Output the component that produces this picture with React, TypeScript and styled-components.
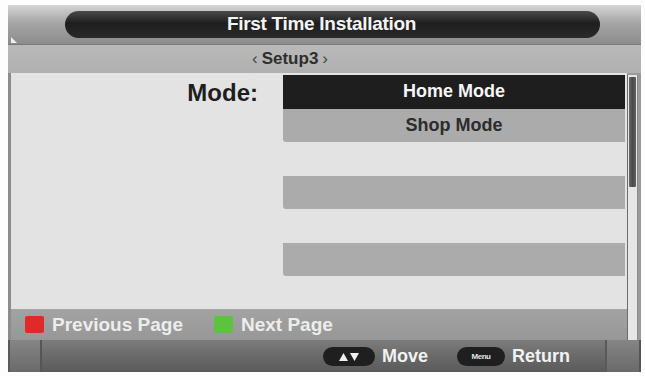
import React from "react";
import styled, { createGlobalStyle } from "styled-components";

const Global = createGlobalStyle`
  html, body { margin: 0; padding: 0; background: #fdfdfd; }
  body { font-family: "Liberation Sans", Arial, sans-serif; }
`;

const Frame = styled.div`
  margin: 5px 0 0 8px;
  width: 633px;
  height: 367px;
  display: flex;
  flex-direction: column;
  background: #9a9a9a;
`;

const Header = styled.div`
  position: relative;
  height: 40px;
  display: flex;
  align-items: center;
  padding: 0 41px 0 57px;
  background: linear-gradient(180deg, #d4d4d4 0%, #a6a6a6 45%, #8c8c8c 100%);
  border-bottom: 1px solid #7a7a7a;
  box-sizing: border-box;
`;

const Glint = styled.div`
  position: absolute;
  left: 3px;
  bottom: 1px;
  width: 0;
  height: 0;
  border-left: 6px solid #f0f0f0;
  border-top: 6px solid transparent;
`;

const TitlePill = styled.div`
  flex: 1;
  height: 27px;
  border-radius: 14px;
  background: linear-gradient(180deg, #4a4a4a 0%, #1e1e1e 45%, #2a2a2a 100%);
  color: #f4f4f4;
  font-weight: bold;
  font-size: 19px;
  letter-spacing: -0.3px;
  display: flex;
  align-items: center;
  justify-content: center;
  padding-right: 22px;
  margin-top: -1px;
`;

const SubHeader = styled.div`
  height: 28px;
  background: linear-gradient(180deg, #b9b9b9, #b0b0b0);
  display: flex;
  align-items: center;
  justify-content: center;
  padding-right: 69px;
  color: #2e2e2e;
  font-weight: bold;
  font-size: 17px;
  box-sizing: border-box;
`;

const Arrow = styled.span`
  font-weight: normal;
  font-size: 17px;
  color: #444;
  margin: 0 4px;
`;

const Body = styled.div`
  display: flex;
  flex: 1;
  min-height: 0;
`;

const Main = styled.div`
  width: 619px;
  display: flex;
  flex-direction: column;
`;

const Content = styled.div`
  height: 236px;
  background: #e3e3e3;
  border-left: 3px solid #8c8c8c;
  box-sizing: border-box;
  display: grid;
  grid-template-columns: 272px 342px;
  padding-top: 2px;
`;

const Label = styled.div`
  text-align: right;
  padding-right: 25px;
  padding-top: 4px;
  font-weight: bold;
  font-size: 24px;
  color: #1e1e1e;
`;

const List = styled.div`
  display: flex;
  flex-direction: column;
`;

const Row = styled.div<{ $kind: "active" | "grey" | "blank" }>`
  height: 33.5px;
  display: flex;
  align-items: center;
  justify-content: center;
  font-weight: bold;
  font-size: 18px;
  background: ${(p) =>
    p.$kind === "active" ? "#1e1e1e" : p.$kind === "grey" ? "#ababab" : "transparent"};
  color: ${(p) => (p.$kind === "active" ? "#f6f6f6" : "#2c2c2c")};
  border-radius: ${(p) => (p.$kind === "grey" ? "0 0 0 3px" : "0")};
`;

const Footer = styled.div`
  height: 31px;
  background: linear-gradient(180deg, #a3a3a3, #979797);
  border-left: 3px solid #8c8c8c;
  box-sizing: border-box;
  display: flex;
  align-items: center;
  padding-left: 14px;
  gap: 8px;
`;

const ColorKey = styled.div<{ $color: string }>`
  width: 19px;
  height: 17px;
  border-radius: 2px;
  background: ${(p) => p.$color};
`;

const FooterText = styled.span<{ $gap?: number }>`
  color: #ededed;
  font-weight: bold;
  font-size: 19px;
  margin-right: ${(p) => p.$gap ?? 0}px;
`;

const ScrollCol = styled.div`
  width: 14px;
  background: #9a9a9a;
  display: flex;
  padding-top: 2px;
  box-sizing: border-box;
`;

const Track = styled.div`
  width: 11px;
  background: #e6e6e6;
  border-left: 1px solid #6d6d6d;
  border-right: 1px solid #8a8a8a;
  box-sizing: border-box;
  display: flex;
  flex-direction: column;
`;

const Thumb = styled.div`
  height: 110px;
  margin: 2px 1px 0;
  background: linear-gradient(90deg, #6a6a6a, #4a4a4a, #5f5f5f);
  border-radius: 1px;
`;

const BottomBar = styled.div`
  height: 32px;
  display: flex;
  background: linear-gradient(180deg, #7c7c7c 0%, #6a6a6a 50%, #5a5a5a 100%);
`;

const EndBlock = styled.div<{ $w: number }>`
  width: ${(p) => p.$w}px;
  background: linear-gradient(180deg, #858585, #6a6a6a);
  border-left: 2px solid #595959;
  border-right: 2px solid #555;
  box-sizing: border-box;
`;

const Hints = styled.div`
  flex: 1;
  display: flex;
  align-items: center;
  justify-content: flex-end;
  padding-right: 35px;
`;

const KeyPill = styled.span<{ $w: number }>`
  width: ${(p) => p.$w}px;
  height: 19px;
  border-radius: 10px;
  background: #1f1f1f;
  display: inline-flex;
  align-items: center;
  justify-content: center;
  margin-right: 7px;
  margin-top: 1px;
`;

const KeyLabel = styled.span`
  font-size: 8px;
  font-weight: bold;
  color: #e4e4e4;
  letter-spacing: -0.5px;
`;

const HintText = styled.span<{ $gap?: number }>`
  color: #f2f2f2;
  font-weight: bold;
  font-size: 18px;
  margin-right: ${(p) => p.$gap ?? 0}px;
`;

const UpDown = () => (
  <svg width="20" height="10" viewBox="0 0 20 10">
    <polygon points="0,9 4.5,1 9,9" fill="#f0f0f0" />
    <polygon points="11,1 20,1 15.5,9" fill="#f0f0f0" />
  </svg>
);

export default function App() {
  return (
    <>
      <Global />
      <Frame>
        <Header>
          <Glint />
          <TitlePill>First Time Installation</TitlePill>
        </Header>
        <SubHeader>
          <Arrow>‹</Arrow>Setup3<Arrow>›</Arrow>
        </SubHeader>
        <Body>
          <Main>
            <Content>
              <Label>Mode:</Label>
              <List>
                <Row $kind="active">Home Mode</Row>
                <Row $kind="grey">Shop Mode</Row>
                <Row $kind="blank" />
                <Row $kind="grey" />
                <Row $kind="blank" />
                <Row $kind="grey" />
              </List>
            </Content>
            <Footer>
              <ColorKey $color="#de2a2a" />
              <FooterText $gap={23}>Previous Page</FooterText>
              <ColorKey $color="#5cc43c" />
              <FooterText>Next Page</FooterText>
            </Footer>
          </Main>
          <ScrollCol>
            <Track>
              <Thumb />
            </Track>
          </ScrollCol>
        </Body>
        <BottomBar>
          <EndBlock $w={34} />
          <Hints>
            <KeyPill $w={52}>
              <UpDown />
            </KeyPill>
            <HintText $gap={29}>Move</HintText>
            <KeyPill $w={48}>
              <KeyLabel>Menu</KeyLabel>
            </KeyPill>
            <HintText>Return</HintText>
          </Hints>
          <EndBlock $w={36} />
        </BottomBar>
      </Frame>
    </>
  );
}
